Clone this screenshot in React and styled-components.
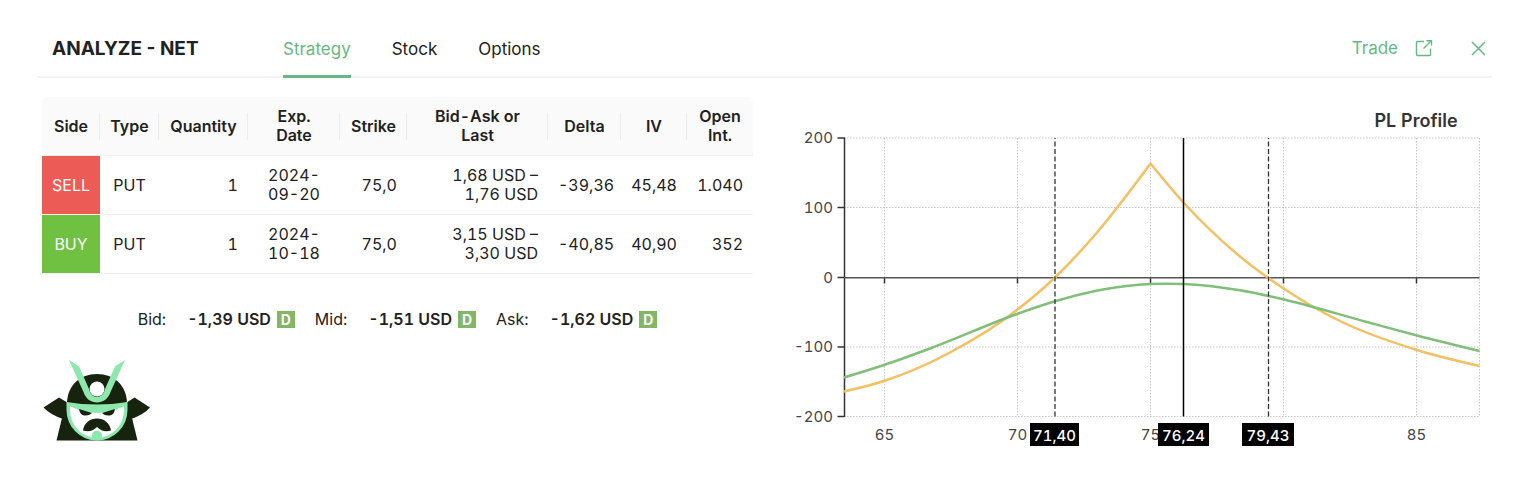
import React from "react";
import styled, { createGlobalStyle } from "styled-components";

const GlobalStyle = createGlobalStyle`
  * { box-sizing: border-box; }
  body {
    margin: 0;
    background: #fff;
    color: #212121;
    font-family: Inter, "Liberation Sans", sans-serif;
    font-size: 16px;
    line-height: 19px;
  }
`;

const GREEN = "#66b985";

const Page = styled.main`
  padding: 20px 44px 20px 37px;
`;

const Header = styled.header`
  display: flex;
  align-items: stretch;
  height: 58px;
  padding-left: 15px;
  border-bottom: 2px solid #f3f3f3;
`;

const Title = styled.h1`
  width: 231px;
  margin: 0;
  font-size: 19px;
  font-weight: 700;
  line-height: 58px;
`;

const Tabs = styled.nav`
  display: flex;
  gap: 41px;
  flex: 1;
`;

const Tab = styled.a`
  height: 58px;
  font-size: 17px;
  line-height: 58px;
  color: ${(p) => (p.$active ? GREEN : "#212121")};
  border-bottom: 3px solid ${(p) => (p.$active ? GREEN : "transparent")};
  text-decoration: none;
`;

const Actions = styled.div`
  display: flex;
  align-items: center;
  gap: 38px;
  padding: 0 6px 0 0;
`;

const TradeLink = styled.a`
  display: flex;
  align-items: center;
  gap: 17px;
  font-size: 17px;
  color: ${GREEN};
  text-decoration: none;
`;

const CloseButton = styled.button`
  display: flex;
  padding: 0;
  border: 0;
  background: none;
  color: ${GREEN};
  cursor: pointer;
`;

const Content = styled.div`
  display: grid;
  grid-template-columns: 711fr 702fr;
  gap: 37px;
  padding: 19px 0 0 5px;
`;

const Legs = styled.table`
  width: 100%;
  table-layout: fixed;
  border-collapse: separate;
  border-spacing: 0;
  font-variant-numeric: tabular-nums;
`;

const HeadCell = styled.th`
  position: relative;
  height: 59px;
  padding: 0 8px;
  background: #fafafa;
  border-bottom: 1px solid #f0f0f0;
  font-weight: 600;
  text-align: center;
  white-space: pre-line;
  &:first-child { border-top-left-radius: 6px; }
  &:last-child { border-top-right-radius: 6px; }
  &:not(:last-child)::after {
    content: "";
    position: absolute;
    top: 16px;
    right: 0;
    width: 1px;
    height: 27px;
    background: #ececec;
  }
`;

const Cell = styled.td`
  height: 59px;
  padding: 0 10px;
  border-bottom: 1px solid #f0f0f0;
  text-align: ${(p) => p.$align || "right"};
  white-space: pre-line;
`;

const SideCell = styled(Cell)`
  padding: 0;
  color: #fff;
  text-align: center;
  background: ${(p) => (p.$side === "SELL" ? "#ec5b56" : "#70c041")};
`;

const Prices = styled.dl`
  display: flex;
  justify-content: center;
  gap: 20px;
  margin: 36px 0 0;
  font-variant-numeric: tabular-nums;
`;

const Price = styled.div`
  display: flex;
  align-items: center;
`;

const PriceLabel = styled.dt`
  margin-right: 21px;
`;

const PriceValue = styled.dd`
  display: flex;
  align-items: center;
  gap: 6px;
  margin: 0;
  font-weight: 600;
`;

const DelayBadge = styled.span`
  width: 18px;
  height: 17px;
  background: #82b768;
  color: #fff;
  font-size: 14px;
  font-weight: 700;
  line-height: 17px;
  text-align: center;
`;

const Logo = styled.svg`
  display: block;
  width: 108px;
  height: 82px;
  margin-top: 31px;
`;

const Chart = styled.svg`
  display: block;
  width: 100%;
  height: auto;
  font-size: 15px;
  font-variant-numeric: tabular-nums;
`;

const ChartTitle = styled.text`
  font-size: 18px;
  font-weight: 600;
  fill: #333;
  text-anchor: middle;
`;

const AxisLabel = styled.text`
  fill: #444;
  text-anchor: ${(p) => p.$anchor || "middle"};
`;

const MarkerLabel = styled.text`
  fill: #fff;
  font-weight: 500;
  text-anchor: middle;
`;

const columns = [
  ["Side", 58], ["Type", 59], ["Quantity", 89], ["Exp.\nDate", 92], ["Strike", 67],
  ["Bid-Ask or\nLast", 141], ["Delta", 73], ["IV", 66], ["Open\nInt.", 66],
];

const legs = [
  { side: "SELL", exp: "2024-\n09-20", price: "1,68 USD –\n1,76 USD", delta: "-39,36", iv: "45,48", oi: "1.040" },
  { side: "BUY", exp: "2024-\n10-18", price: "3,15 USD –\n3,30 USD", delta: "-40,85", iv: "40,90", oi: "352" },
];

const prices = [["Bid:", "-1,39 USD"], ["Mid:", "-1,51 USD"], ["Ask:", "-1,62 USD"]];

const expiryLeft = [[844, 391.5], [884, 381], [950, 352.5], [1017, 310], [1055, 277.5], [1097, 232.5], [1150.5, 163.5]];
const expiryRight = [[1150.5, 163.5], [1183, 202], [1237, 254], [1284, 288.7], [1340, 321], [1417, 350], [1479.5, 366]];
const today = [[844, 377.5], [884, 365], [930, 348.5], [1017, 314], [1055, 301.3], [1103, 289.5], [1150, 284], [1183, 284], [1240, 290.3], [1284, 299.5], [1367, 322], [1417, 335.5], [1479.5, 351]];

// Smooth curve through the points: a Hermite spline with distance-weighted slopes.
const spline = (pts) => {
  const last = pts.length - 1;
  const step = pts.slice(1).map((p, i) => p[0] - pts[i][0]);
  const rise = pts.slice(1).map((p, i) => (p[1] - pts[i][1]) / step[i]);
  const slope = pts.map((_, i) =>
    i === 0 || i === last ? 0 : (rise[i - 1] * step[i] + rise[i] * step[i - 1]) / (step[i - 1] + step[i]));
  slope[0] = 1.5 * rise[0] - 0.5 * slope[1];
  slope[last] = 1.5 * rise[last - 1] - 0.5 * slope[last - 1];
  return rise.reduce((d, _, i) => {
    const [x, y] = pts[i];
    const [nx, ny] = pts[i + 1];
    const h = step[i] / 3;
    return `${d} C${x + h},${y + h * slope[i]} ${nx - h},${ny - h * slope[i + 1]} ${nx},${ny}`;
  }, `M${pts[0][0]},${pts[0][1]}`);
};

const yTicks = [["200", 138], ["100", 207.5], ["0", 277.5], ["-100", 347], ["-200", 416.5]];
const xTicks = [["65", 884.5], ["70", 1017.5], ["75", 1150.5], ["", 1283.5], ["85", 1416.5]];
const markers = [["71,40", 1055, 1030, 49, true], ["76,24", 1183.5, 1158, 51, false], ["79,43", 1268.5, 1242, 52, true]];

function ProfitChart() {
  return (
    <Chart viewBox="790 97 702 361" role="img" aria-label="PL Profile">
      <ChartTitle x="1416" y="127">PL Profile</ChartTitle>
      <g stroke="#c8c8c8" strokeDasharray="1.5 1.5">
        {yTicks.map(([t, y]) => <path key={t} d={`M844 ${y}H1479.5`} />)}
        {xTicks.map(([, x]) => <path key={x} d={`M${x} 138V416.5`} />)}
        <path d="M1479.5 138V416.5" />
      </g>
      <g stroke="#333" strokeWidth="1.5" fill="none">
        <path d="M844.5 137.5V417" />
        {yTicks.map(([t, y]) => <path key={t} d={`M837.5 ${y}H844.5`} />)}
        {xTicks.map(([, x]) => <path key={x} d={`M${x} 278V283.5`} />)}
        <path d="M844 277.7H1479.5" stroke="#555" />
      </g>
      {yTicks.map(([t, y]) => <AxisLabel key={t} x="833" y={y + 5} $anchor="end">{t}</AxisLabel>)}
      {xTicks.map(([t, x]) => <AxisLabel key={x} x={x} y="440">{t}</AxisLabel>)}
      <g fill="none" strokeWidth="2.5" strokeLinejoin="bevel">
        <path d={`${spline(expiryLeft)} ${spline(expiryRight).replace("M", "L")}`} stroke="#f5bf62" />
        <path d={spline(today)} stroke="#7fbf78" />
      </g>
      {markers.map(([t, x, left, w, dashed]) => (
        <g key={t}>
          <path d={dashed ? `M${x} 416.5V138` : `M${x} 138V416.5`} stroke={dashed ? "#333" : "#000"} strokeWidth={dashed ? 1.3 : 1.5} strokeDasharray={dashed ? "5 2.5" : "none"} />
          <rect x={left} y="423" width={w} height="23" fill="#000" />
          <MarkerLabel x={left + w / 2} y="441">{t}</MarkerLabel>
        </g>
      ))}
    </Chart>
  );
}

function SamuraiLogo() {
  return (
    <Logo viewBox="42 360 108 82" role="img" aria-label="Samurai">
      <g fill="#18230f">
        <path d="M43.500 407.500L59 397.500L68 403V420L63 419Q50 414.500 43.500 407.500Z" />
        <path d="M150 407.500L134.500 397.500L126 403V420L131 419Q144 414.500 150 407.500Z" />
        <path d="M62 418L68 402H126L132 418L137.500 440.500H56.500Z" />
        <path d="M67 402C68 385 80 374 97 374S126 385 127 402Z" />
      </g>
      <path d="M66.500 402Q97 407 127.500 402V410A30.500 30.500 0 0 1 66.500 410Z" fill="#8ce8ac" />
      <path d="M70 406Q97 418 124 406V410A27 28 0 0 1 70 410Z" fill="#fff" />
      <path d="M70 404Q97 410 124 404V406Q111 413 97 413T70 406Z" fill="#8ce8ac" />
      <g fill="#18230f">
        <path d="M79 409L92 413Q89 416 84.500 415.500Q80 415 79 409Z" />
        <path d="M115 409L102 413Q105 416 109.500 415.500Q114 415 115 409Z" />
        <path d="M83 430.500C84 423 90 418.500 97 418.500S110 423 111 430.500Q103 433 97 427Q91 433 83 430.500Z" />
      </g>
      <circle cx="97" cy="435.500" r="5" fill="#8ce8ac" />
      <ellipse cx="97" cy="389" rx="7.500" ry="7.500" fill="#fff" />
      <path d="M69 360L79 366.500L89 389C91 399.500 103 399.500 105 389L115 366.500L125 360L110.500 392C106 406 88 406 83.500 392Z" fill="#8ce8ac" />
    </Logo>
  );
}

export default function App() {
  return (
    <>
      <GlobalStyle />
      <Page>
        <Header>
          <Title>ANALYZE - NET</Title>
          <Tabs>
            <Tab href="#strategy" $active>Strategy</Tab>
            <Tab href="#stock">Stock</Tab>
            <Tab href="#options">Options</Tab>
          </Tabs>
          <Actions>
            <TradeLink href="#trade">
              Trade
              <svg width="18" height="18" viewBox="0 0 18 18" fill="none" stroke="currentColor" strokeWidth="1.4" aria-hidden="true">
                <path d="M9 2.500H2.500Q1.500 2.500 1.500 3.500V15.500Q1.500 16.500 2.500 16.500H14.500Q15.500 16.500 15.500 15.500V9.500" />
                <path d="M8.500 9.500L16 2M11.500 1.700H16.500V6.500" />
              </svg>
            </TradeLink>
            <CloseButton aria-label="Close">
              <svg width="15" height="15" viewBox="0 0 15 15" fill="none" stroke="currentColor" strokeWidth="1.5" aria-hidden="true">
                <path d="M1 1L14 14M14 1L1 14" />
              </svg>
            </CloseButton>
          </Actions>
        </Header>
        <Content>
          <section>
            <Legs>
              <colgroup>
                {columns.map(([name, w]) => <col key={name} style={{ width: `${(w / 711) * 100}%` }} />)}
              </colgroup>
              <thead>
                <tr>{columns.map(([name]) => <HeadCell key={name} scope="col">{name}</HeadCell>)}</tr>
              </thead>
              <tbody>
                {legs.map((l) => (
                  <tr key={l.side}>
                    <SideCell $side={l.side}>{l.side}</SideCell>
                    <Cell $align="center">PUT</Cell>
                    <Cell>1</Cell>
                    <Cell $align="center">{l.exp}</Cell>
                    <Cell>75,0</Cell>
                    <Cell>{l.price}</Cell>
                    <Cell>{l.delta}</Cell>
                    <Cell>{l.iv}</Cell>
                    <Cell>{l.oi}</Cell>
                  </tr>
                ))}
              </tbody>
            </Legs>
            <Prices>
              {prices.map(([label, value]) => (
                <Price key={label}>
                  <PriceLabel>{label}</PriceLabel>
                  <PriceValue>{value}<DelayBadge>D</DelayBadge></PriceValue>
                </Price>
              ))}
            </Prices>
            <SamuraiLogo />
          </section>
          <ProfitChart />
        </Content>
      </Page>
    </>
  );
}
